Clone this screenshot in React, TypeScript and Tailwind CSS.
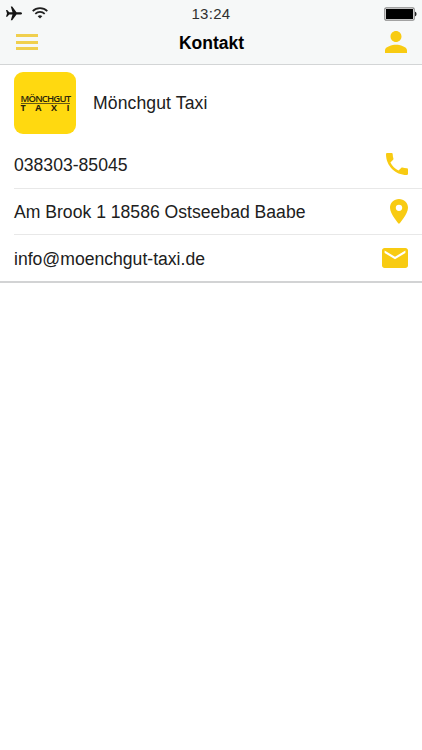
import type { ReactNode } from "react";

function Row({ label, icon, className }: { label: string; icon: ReactNode; className: string }) {
  return (
    <div className={`ml-[14px] flex items-center justify-between pr-[14px] ${className}`}>
      <span className="pt-0.5 text-[17.6px] leading-5 whitespace-nowrap">{label}</span>
      {icon}
    </div>
  );
}

function StatusBar() {
  return (
    <div className="grid h-7 grid-cols-3 items-center pr-[5px] pl-[6px]">
      <div className="flex items-center gap-[10px]">
        <svg className="-mt-0.5 h-[15px] w-4" viewBox="0 0 16 15" fill="#151515">
          <path d="M0 4h1.2l2 2.3 3.3-.1L4.8.5h1.4l4.3 5.7h3.6c1.2 0 1.9.6 1.9 1.2s-.7 1.2-1.9 1.2h-3.6l-4.3 5.7H4.8l1.7-5.7-3.3-.1-2 2.3H0l1-3.4z" />
        </svg>
        <svg className="-mt-0.5 h-3 w-4" viewBox="0 0 16 12" fill="none" stroke="#202020" strokeWidth="1.7">
          <path d="M.7 4.2a10.4 10.4 0 0 1 14.6 0M3.3 6.9a6.6 6.6 0 0 1 9.4 0" />
          <path d="M5.7 9.2a3.4 3.4 0 0 1 4.6 0L8 11.6z" fill="#202020" stroke="none" />
        </svg>
      </div>
      <span className="-ml-px text-center text-[15px] leading-5 tracking-[0.3px] text-[#303030]">13:24</span>
      <svg className="h-[14px] w-[33px] justify-self-end" viewBox="0 0 33 14">
        <rect x=".8" y=".8" width="29.4" height="12.4" rx="1.5" fill="#fff" stroke="#858585" strokeWidth="1.2" />
        <rect x="2" y="2" width="27" height="10" fill="#000" />
        <path d="M31 4.7c2 .3 2 4.3 0 4.6z" fill="#222" />
      </svg>
    </div>
  );
}

function Logo() {
  return (
    <div className="flex h-[62px] w-[62px] flex-col items-center rounded-[9px] bg-[#ffd910] pt-5 font-['Open_Sans',sans-serif] text-[#29240c]">
      <div className="h-3 w-[49px] border-b border-[#655717] text-[9.5px] leading-[13px] font-semibold tracking-[-0.8px] whitespace-nowrap">
        MÖNCHGUT
      </div>
      <div className="flex w-[49px] justify-between text-[9px] leading-[8px] font-bold">
        <span>T</span>
        <span>A</span>
        <span>X</span>
        <span>I</span>
      </div>
    </div>
  );
}

export default function App() {
  return (
    <div className="min-h-[750px] w-[422px] bg-white font-['Liberation_Sans',Arial,sans-serif] text-[#202020]">
      <header className="h-[65px] border-b border-[#d3d5d6] bg-[#f6f8f8]">
        <StatusBar />
        <div className="grid h-7 grid-cols-3 items-center pr-[15px] pl-4">
          <div className="flex h-4 w-[22px] flex-col justify-between">
            <div className="h-[3px] bg-[#f0cf4e]" />
            <div className="h-[3px] bg-[#f0cf4e]" />
            <div className="h-[3px] bg-[#f0cf4e]" />
          </div>
          <h1 className="pt-0.5 text-center text-[17.5px] leading-5 font-bold text-black">Kontakt</h1>
          <svg className="h-[22px] w-[22px] justify-self-end" viewBox="4 4 16 16" fill="#f8cb12">
            <path d="M12 12c2.21 0 4-1.79 4-4s-1.79-4-4-4-4 1.79-4 4 1.79 4 4 4zm0 2c-2.67 0-8 1.34-8 4v2h16v-2c0-2.66-5.33-4-8-4z" />
          </svg>
        </div>
      </header>
      <main className="border-b-2 border-[#d2d3d4]">
        <div className="flex h-[77px] items-center gap-[17px] pb-px pl-[14px]">
          <Logo />
          <span className="text-[17.6px] leading-5 tracking-[0.1px]">Mönchgut Taxi</span>
        </div>
        <Row
          className="h-[47px] border-b border-[#e8e8e8] pb-0.5"
          label="038303-85045"
          icon={
            <svg className="h-[22px] w-[22px]" viewBox="3 3 18 18" fill="#f8cb12">
              <path d="M6.62 10.79c1.44 2.83 3.76 5.14 6.59 6.59l2.2-2.2c.27-.27.67-.36 1.02-.24 1.12.37 2.33.57 3.57.57.55 0 1 .45 1 1V20c0 .55-.45 1-1 1-9.39 0-17-7.61-17-17 0-.55.45-1 1-1h3.5c.55 0 1 .45 1 1 0 1.25.2 2.45.57 3.57.11.35.03.74-.25 1.02l-2.2 2.2z" />
            </svg>
          }
        />
        <Row
          className="h-[46px] border-b border-[#e8e8e8] pb-px"
          label="Am Brook 1 18586 Ostseebad Baabe"
          icon={
            <svg className="h-[25px] w-[18px]" viewBox="5 2 14 20" preserveAspectRatio="none" fill="#f8cb12">
              <path d="M12 2C8.13 2 5 5.13 5 9c0 5.25 7 13 7 13s7-7.75 7-13c0-3.87-3.13-7-7-7zm0 9.5a2.5 2.5 0 0 1 0-5 2.5 2.5 0 0 1 0 5z" />
            </svg>
          }
        />
        <Row
          className="h-[46px]"
          label="info@moenchgut-taxi.de"
          icon={
            <svg className="h-5 w-[26px]" viewBox="2 4 20 16" preserveAspectRatio="none" fill="#f8cb12">
              <path d="M20 4H4c-1.1 0-1.99.9-1.99 2L2 18c0 1.1.9 2 2 2h16c1.1 0 2-.9 2-2V6c0-1.1-.9-2-2-2zm0 4l-8 5-8-5V6l8 5 8-5v2z" />
            </svg>
          }
        />
      </main>
    </div>
  );
}
